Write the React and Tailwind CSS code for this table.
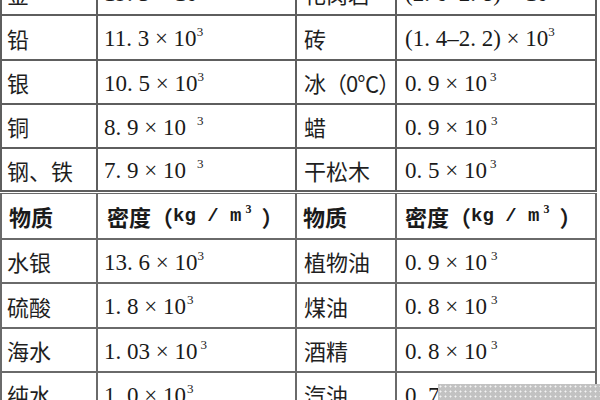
import React from "react";

const cjk = "font-['Noto_Sans_CJK_SC',sans-serif]";

function Sci({ v, gap }) {
  return (
    <span className="font-['Liberation_Serif',serif] text-[23px] leading-none text-[#1a1a1a]">
      {v}
      <span className={`${gap} text-[13px] align-[10px]`}>3</span>
    </span>
  );
}

function Name({ t, cls = "" }) {
  return (
    <span className={`font-['Noto_Sans_CJK_SC',sans-serif] text-[22px] leading-none text-[#1f1f1f] ${cls}`}>
      {t}
    </span>
  );
}

function Row({ r }) {
  return (
    <>
      <div className="bg-white flex items-center whitespace-nowrap pl-[5px]">
        <Name t={r[0]} />
      </div>
      <div className="bg-white flex items-center whitespace-nowrap pl-[6px]">
        <Sci v={r[1]} gap={r[2]} />
      </div>
      <div className="bg-white flex items-center whitespace-nowrap pl-[7px]">
        <Name t={r[3]} cls={r[6] || ""} />
      </div>
      <div className="bg-white flex items-center whitespace-nowrap pl-[8px]">
        <Sci v={r[4]} gap={r[5]} />
      </div>
    </>
  );
}

function Header() {
  const unit = (pl) => (
    <div className={`bg-white flex items-center whitespace-nowrap ${pl}`}>
      <span className={`${cjk} font-bold text-[22px] leading-none text-[#1a1a1a]`}>密度（</span>
      <span className="font-['Liberation_Mono',monospace] font-bold text-[19px] leading-none text-[#1a1a1a]">
        kg / m
      </span>
      <span className="font-['Liberation_Serif',serif] font-bold text-[12px] leading-none ml-[4px] -translate-y-[7px] text-[#1a1a1a]">
        3
      </span>
      <span className={`${cjk} font-bold text-[22px] leading-none ml-[10px] text-[#1a1a1a]`}>）</span>
    </div>
  );
  return (
    <>
      <div className="bg-white flex items-center whitespace-nowrap pl-[7px]">
        <span className={`${cjk} font-bold text-[22px] leading-none text-[#1a1a1a]`}>物质</span>
      </div>
      {unit("pl-[9px]")}
      <div className="bg-white flex items-center whitespace-nowrap pl-[6px]">
        <span className={`${cjk} font-bold text-[22px] leading-none text-[#1a1a1a]`}>物质</span>
      </div>
      {unit("pl-[8px]")}
    </>
  );
}

const top = [
  ["金", "19. 3 × 10", "ml-0", "花岗岩", "(2. 6–2. 8) × 10", "ml-0"],
  ["铅", "11. 3 × 10", "ml-0", "砖", "(1. 4–2. 2) × 10", "ml-0"],
  ["银", "10. 5 × 10", "ml-0", "冰（0℃）", "0. 9 × 10", "ml-[3px]", "text-[21px] tracking-[-1px]"],
  ["铜", "8. 9 × 10", "ml-[11px]", "蜡", "0. 9 × 10", "ml-[4px]"],
  ["钢、铁", "7. 9 × 10", "ml-[11px]", "干松木", "0. 5 × 10", "ml-[3px]"],
];

const bottom = [
  ["水银", "13. 6 × 10", "ml-0", "植物油", "0. 9 × 10", "ml-[4px]"],
  ["硫酸", "1. 8 × 10", "ml-[1px]", "煤油", "0. 8 × 10", "ml-[4px]"],
  ["海水", "1. 03 × 10", "ml-[3px]", "酒精", "0. 8 × 10", "ml-[4px]"],
  ["纯水", "1. 0 × 10", "ml-[1px]", "汽油", "0. 7 × 10", "ml-[15px]"],
];

export default function App() {
  return (
    <div className="relative w-[600px] h-[400px] overflow-hidden bg-white">
      <div className="w-[597px] mt-[-31px] grid grid-cols-[94px_197px_98px_198px] grid-rows-[43px_43px_42px_42px_41px] gap-[2px] p-[2px] bg-[#5e5e5e]">
        {top.map((r, i) => (
          <Row key={i} r={r} />
        ))}
      </div>
      <div className="w-[597px] mt-[1px] grid grid-cols-[94px_197px_98px_198px] grid-rows-[44px_42px_43px_42px_42px] gap-[2px] px-[2px] pt-[1px] pb-[2px] bg-[#6a6a6a]">
        <Header />
        {bottom.map((r, i) => (
          <Row key={i} r={r} />
        ))}
      </div>
      <div className="absolute left-[438px] top-[384px] w-[162px] h-[16px] bg-[#c2c2c2] bg-[radial-gradient(circle,#f4f4f4_0.8px,transparent_1.2px)] bg-[size:5px_5px]" />
    </div>
  );
}
